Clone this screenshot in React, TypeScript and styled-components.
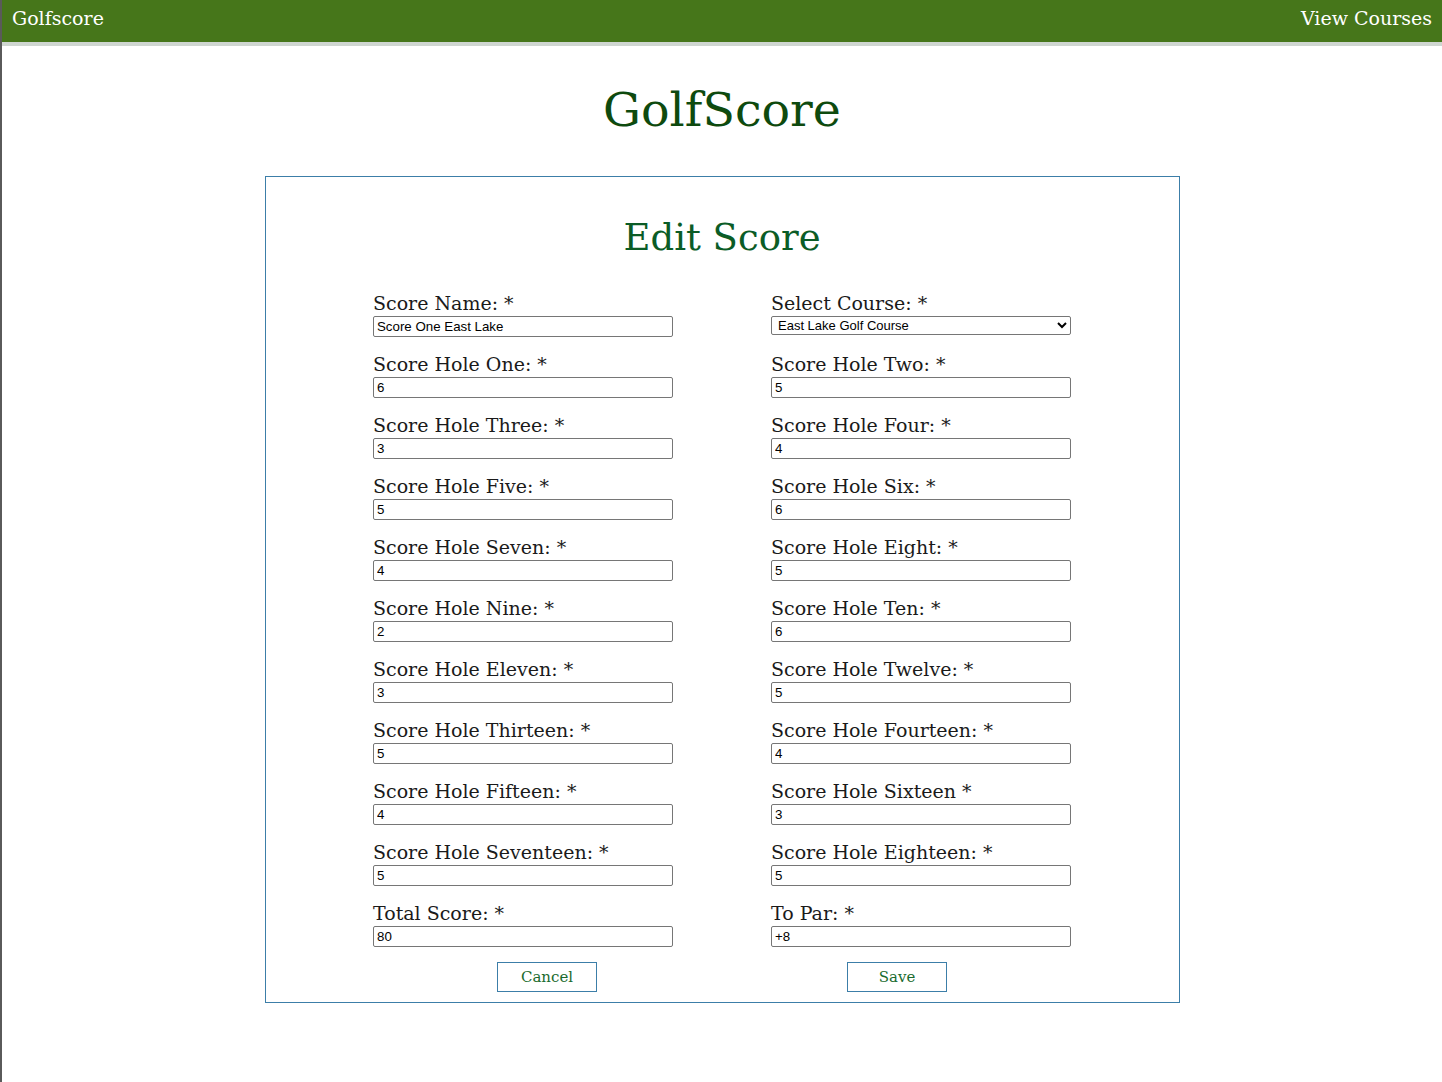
import styled, { createGlobalStyle } from 'styled-components'

const GlobalStyle = createGlobalStyle`
  html, body {
    margin: 0;
    padding: 0;
    background: #ffffff;
  }
  body {
    border-left: 2px solid #5a5a5a;
    min-height: 1082px;
    box-sizing: border-box;
    font-family: "DejaVu Serif", "Liberation Serif", serif;
  }
`

const NavBar = styled.nav`
  display: flex;
  justify-content: space-between;
  align-items: center;
  box-sizing: border-box;
  height: 46px;
  padding: 0 10px 6px;
  background-color: #46761a;
  border-bottom: 4px solid #cfd6d1;
`

const NavLink = styled.a`
  color: #ffffff;
  font-size: 19px;
  line-height: 30px;
  text-decoration: none;
`

const Title = styled.h1`
  margin: 34px 0 36px;
  text-align: center;
  font-size: 47.5px;
  font-weight: normal;
  line-height: 60px;
  color: #0e4a0e;
`

const Card = styled.div`
  width: 915px;
  margin: 0 auto;
  box-sizing: border-box;
  border: 1px solid #3c7ea8;
  padding: 34px 0 10px;
`

const CardTitle = styled.h2`
  margin: 0 0 27px;
  text-align: center;
  font-size: 37px;
  font-weight: normal;
  line-height: 54px;
  color: #0b5c26;
`

const FormGrid = styled.div`
  display: grid;
  grid-template-columns: 300px 300px;
  column-gap: 98px;
  justify-content: center;
  margin-top: -2px;
`

const Field = styled.div`
  display: flex;
  flex-direction: column;
  margin-bottom: 14px;
`

const Label = styled.label`
  font-size: 19px;
  line-height: 26px;
  color: #1a1a1a;
`

const Input = styled.input`
  box-sizing: border-box;
  width: 300px;
  height: 21px;
  margin: 0;
  padding: 1px 3px;
  border: 1px solid #767676;
  border-radius: 2px;
  font-family: "Liberation Sans", Arial, sans-serif;
  font-size: 13.3px;
  color: #000;
`

const Select = styled.select`
  box-sizing: border-box;
  width: 300px;
  height: 19px;
  margin: 0;
  padding: 0 2px;
  border: 1px solid #767676;
  border-radius: 2px;
  background: #fff;
  font-family: "Liberation Sans", Arial, sans-serif;
  font-size: 13px;
  color: #000;
`

const Actions = styled.div`
  display: flex;
  justify-content: center;
  gap: 250px;
  margin-top: 1px;
`

const Button = styled.button`
  width: 100px;
  height: 30px;
  border: 1px solid #3c7ea8;
  background: #ffffff;
  color: #1a6b2e;
  font-family: "DejaVu Serif", "Liberation Serif", serif;
  font-size: 15px;
`

const holes: [string, string][] = [
  ['Score Hole One: *', '6'],
  ['Score Hole Two: *', '5'],
  ['Score Hole Three: *', '3'],
  ['Score Hole Four: *', '4'],
  ['Score Hole Five: *', '5'],
  ['Score Hole Six: *', '6'],
  ['Score Hole Seven: *', '4'],
  ['Score Hole Eight: *', '5'],
  ['Score Hole Nine: *', '2'],
  ['Score Hole Ten: *', '6'],
  ['Score Hole Eleven: *', '3'],
  ['Score Hole Twelve: *', '5'],
  ['Score Hole Thirteen: *', '5'],
  ['Score Hole Fourteen: *', '4'],
  ['Score Hole Fifteen: *', '4'],
  ['Score Hole Sixteen *', '3'],
  ['Score Hole Seventeen: *', '5'],
  ['Score Hole Eighteen: *', '5'],
  ['Total Score: *', '80'],
  ['To Par: *', '+8'],
]

function App() {
  return (
    <>
      <GlobalStyle />
      <NavBar>
        <NavLink href="#none">Golfscore</NavLink>
        <NavLink href="#none">View Courses</NavLink>
      </NavBar>
      <Title>GolfScore</Title>
      <Card>
        <CardTitle>Edit Score</CardTitle>
        <FormGrid>
          <Field>
            <Label>Score Name: *</Label>
            <Input defaultValue="Score One East Lake" />
          </Field>
          <Field>
            <Label>Select Course: *</Label>
            <Select defaultValue="east">
              <option value="east">East Lake Golf Course</option>
            </Select>
          </Field>
          {holes.map(([label, value]) => (
            <Field key={label}>
              <Label>{label}</Label>
              <Input defaultValue={value} />
            </Field>
          ))}
        </FormGrid>
        <Actions>
          <Button>Cancel</Button>
          <Button>Save</Button>
        </Actions>
      </Card>
    </>
  )
}

export default App
